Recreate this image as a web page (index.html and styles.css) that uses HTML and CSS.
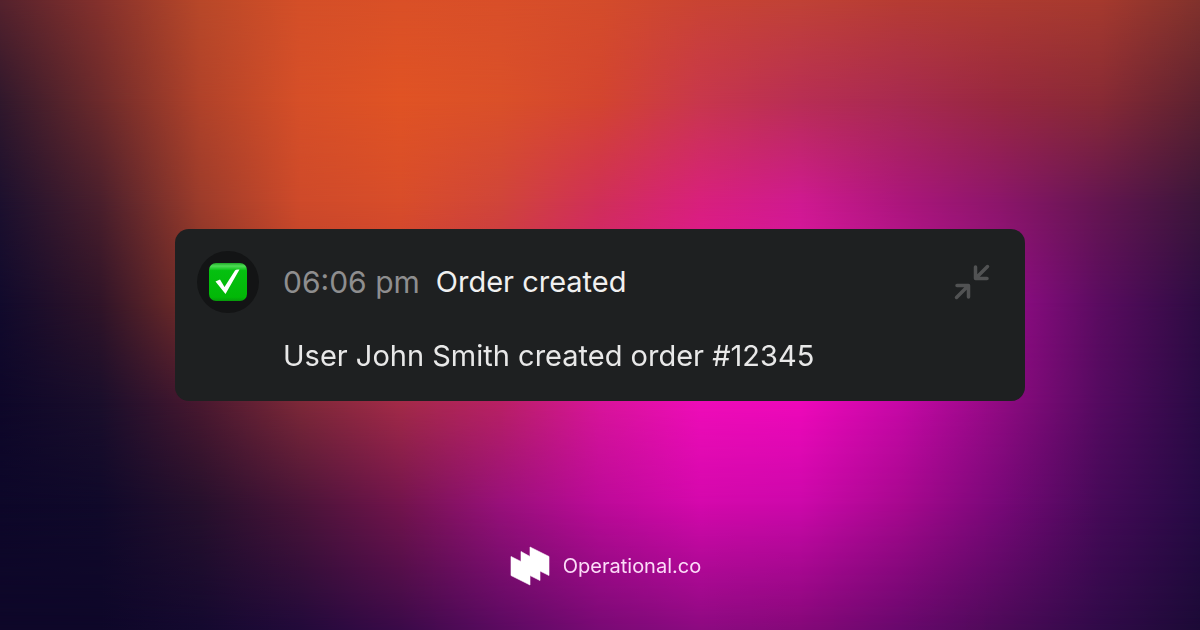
FILE: index.html
```html
<!DOCTYPE html>
<html lang="en">
<head>
<meta charset="utf-8">
<title>Operational.co</title>
<link rel="stylesheet" href="styles.css">
</head>
<body>
<div class="mesh" aria-hidden="true">
  <div class="band band-1"></div>
  <div class="band band-2"></div>
  <div class="band band-3"></div>
  <div class="band band-4"></div>
  <div class="band band-5"></div>
  <div class="band band-6"></div>
  <div class="band band-7"></div>
</div>
<main class="page">
  <article class="event">
    <div class="badge">
      <svg class="check" viewBox="0 0 38 38" role="img" aria-label="Done">
        <defs>
          <linearGradient id="face" x1="0" y1="0" x2="0" y2="1">
            <stop offset="0" stop-color="#1fa826"/>
            <stop offset="0.08" stop-color="#4fdc56"/>
            <stop offset="0.2" stop-color="#05c010"/>
            <stop offset="0.9" stop-color="#02b807"/>
            <stop offset="1" stop-color="#079a0b"/>
          </linearGradient>
        </defs>
        <rect width="38" height="38" rx="7" fill="url(#face)"/>
        <path d="M6.500 18.500 L11 16.500 L15.500 24 L26 7.500 Q27 6 30.500 6.500 L16.500 31 Z" fill="#fff"/>
      </svg>
    </div>
    <div class="body">
      <header class="head">
        <time class="time" datetime="18:06">06:06 pm</time>
        <h1 class="title">Order created</h1>
        <button class="collapse" type="button" aria-label="Collapse">
          <svg viewBox="0 0 36 36" fill="none" stroke="currentColor" stroke-width="3.500" stroke-linecap="round" stroke-linejoin="round">
            <path d="M33.500 2.500 L22 14 M21.500 3 V14.500 H33"/>
            <path d="M2.500 33.500 L14 22 M3 21.500 H14.500 V33"/>
          </svg>
        </button>
      </header>
      <p class="message">User John Smith created order #12345</p>
    </div>
  </article>
</main>
<footer class="brand">
  <svg class="logo" viewBox="0 0 38 38" aria-hidden="true">
    <path d="M0 9.500 L10 14.500 V4.500 L19 9.500 V0 L38 9.500 V28.500 L29 24 V33.500 L19 28.500 V38 L0 28.500 Z" fill="#fff" stroke="#fff" stroke-width="0.600" stroke-linejoin="round"/>
  </svg>
  <span class="name">Operational.co</span>
</footer>
</body>
</html>
```
FILE: styles.css
```css
* {
  box-sizing: border-box;
}

body {
  margin: 0;
  min-height: 100vh;
  display: grid;
  grid-template-rows: 1fr auto 1fr;
  font-family: Inter, "Liberation Sans", sans-serif;
  background: #0d0628;
  overflow: hidden;
}

/* Colour mesh: horizontal gradients that fade into one another down the page */
.mesh {
  position: fixed;
  inset: 0;
  z-index: -1;
}

.band {
  position: absolute;
  inset: 0;
}

.band-1 {
  background: linear-gradient(90deg, #55222d, #85312c, #b84829, #d44f28, #da5027, #d94f29, #d44c2b, #c94433, #c04236, #b63c33, #ae3b31, #a63a2e, #82322c);
}

.band-2 {
  background: linear-gradient(90deg, #30182c, #6c2a2b, #b0422a, #d64f28, #e05324, #da5029, #d3452f, #c8374c, #b82e54, #a82a50, #98283f, #882a35, #5e2230);
  mask-image: linear-gradient(transparent 0%, #000 16%);
}

.band-3 {
  background: linear-gradient(90deg, #1c102e, #4a1f2c, #9c3c2b, #ce4a2a, #d84d2a, #d0453a, #d02f58, #d8207c, #cf1a90, #ac167c, #8c166a, #641650, #3c163a);
  mask-image: linear-gradient(transparent 16%, #000 32%);
}

.band-4 {
  background: linear-gradient(90deg, #110a2c, #301428, #7c3028, #b83f2c, #c83e35, #c9304e, #d81c80, #e612a0, #e00fae, #c00fa0, #960c88, #5a0c60, #2e0c42);
  mask-image: linear-gradient(transparent 32%, #000 48%);
}

.band-5 {
  background: linear-gradient(90deg, #0e0729, #1a0e2b, #48182f, #7c2838, #a22a48, #b82065, #d8149a, #ee0cb8, #ee08ba, #c608a6, #900a82, #540a60, #2a0a44);
  mask-image: linear-gradient(transparent 48%, #000 64%);
}

.band-6 {
  background: linear-gradient(90deg, #0d0729, #10092a, #26102c, #4a1438, #72144c, #98107a, #bc0a98, #d408ac, #cc08aa, #a8088f, #780878, #460a58, #260a44);
  mask-image: linear-gradient(transparent 64%, #000 80%);
}

.band-7 {
  background: linear-gradient(90deg, #0e0729, #0e0729, #14092f, #220a3a, #3a0a48, #5a0a60, #780a74, #8c0a80, #840878, #68086c, #4c0a58, #300a48, #1c0a36);
  mask-image: linear-gradient(transparent 80%, #000 100%);
}

.page {
  grid-row: 2;
  display: flex;
  justify-content: center;
  padding: 0 24px;
}

.event {
  width: 100%;
  max-width: 850px;
  display: flex;
  gap: 24px;
  padding: 22px 32px 26px 22px;
  border-radius: 14px;
  background: #1e2021;
}

.badge {
  flex: none;
  width: 62px;
  height: 62px;
  border-radius: 50%;
  background: #131415;
  display: grid;
  place-items: center;
}

.check {
  display: block;
  width: 38px;
  height: 38px;
}

.body {
  flex: 1;
  min-width: 0;
}

.head {
  display: flex;
  align-items: center;
  gap: 16px;
  min-height: 62px;
}

.time,
.title,
.message {
  margin: 0;
  font-size: 29px;
  line-height: 38px;
  font-weight: 400;
  color: #e8e8e8;
}

.time {
  font-size: 30px;
  color: #8e8e8f;
}

.title {
  color: #f0f0f0;
}

.collapse {
  margin-left: auto;
  padding: 0;
  width: 42px;
  height: 42px;
  display: grid;
  place-items: center;
  border: 0;
  background: none;
  color: #515253;
  cursor: pointer;
}

.collapse svg {
  display: block;
  width: 36px;
  height: 36px;
}

.message {
  margin-top: 24px;
}

.brand {
  grid-row: 3;
  align-self: end;
  display: flex;
  justify-content: center;
  align-items: center;
  gap: 14px;
  padding: 0 0 45px 12px;
}

.logo {
  display: block;
  width: 38px;
  height: 38px;
  overflow: visible;
}

.name {
  font-size: 20px;
  line-height: 24px;
  font-weight: 400;
  color: #fcdcf8;
}
```
